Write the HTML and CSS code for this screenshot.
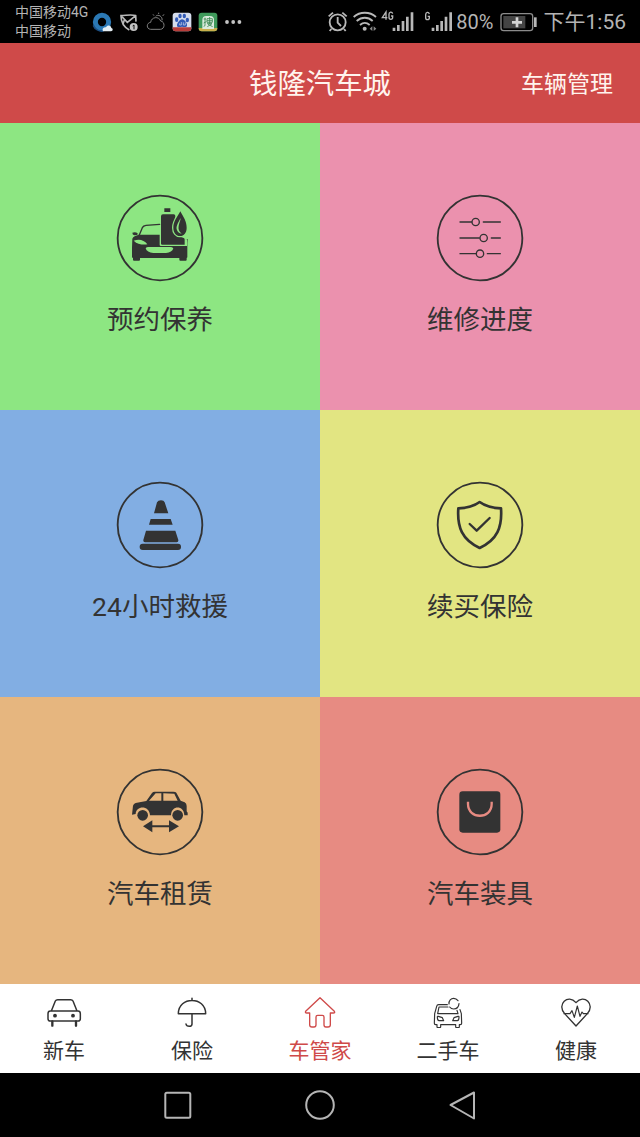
FILE: index.html
```html
<!DOCTYPE html>
<html lang="zh-CN">
<head>
    <meta charset="UTF-8">
    <meta name="viewport" content="width=device-width, initial-scale=1.0">
    <title>钱隆汽车城</title>
    <link rel="stylesheet" href="styles.css">
</head>
<body>
    <div class="status-bar">
        <div class="carriers">
            <div>中国移动4G</div>
            <div>中国移动</div>
        </div>
        <div class="notifications">
            <svg width="21" height="22" viewBox="276 33 63 66">
                <circle cx="306" cy="66" r="20" fill="none" stroke="#2b78b4" stroke-width="15"/>
                <path d="M280 76a28 28 0 0 0 30 17" fill="none" stroke="#1b4f83" stroke-width="5"/>
                <path d="M309 94c-4-9 3-14 9-12 4-9 16-6 16 2 6 1 5 10-1 10z" fill="#e4edf2"/>
            </svg>
            <svg width="20" height="22" viewBox="360 33 60 66" fill="none" stroke="#b9b9b9" stroke-width="5">
                <path d="M391 90c-16-9-25-22-25-43 15 0 28-5 44 0l1 18M367 48l18 19 25-20M376 60l-4 12"/>
                <circle cx="404" cy="81" r="12" fill="#c4c4c4" stroke="none"/>
                <path d="M401 78l4-3v13" stroke="#111" stroke-width="3"/>
            </svg>
            <svg width="20" height="22" viewBox="437 33 60 66" fill="none" stroke="#808080" stroke-width="3">
                <path d="M451 88c-14-1-13-20 0-21 2-17 25-19 30-4 14 2 13 25-1 25z"/>
                <path d="M466 49c7-8 22 1 19 12M475 38v4M458 43l3 4M491 43l-4 5"/>
            </svg>
            <svg width="20" height="20" viewBox="517 36 60 60">
                <rect x="519" y="38" width="56" height="56" rx="9" fill="#d5dcec"/>
                <path d="M519 82h56v3q0 9-9 9h-38q-9 0-9-9z" fill="#b83d3a"/>
                <g fill="#3159b5">
                    <ellipse cx="531" cy="59" rx="5" ry="7"/>
                    <ellipse cx="541" cy="48" rx="5" ry="7"/>
                    <ellipse cx="554" cy="48" rx="5" ry="7"/>
                    <ellipse cx="563" cy="60" rx="5" ry="7"/>
                    <path d="M547 58c8 0 17 13 15 19-2 7-10 3-15 3s-14 4-15-3c-1-6 8-19 15-19z"/>
                </g>
                <path d="M540 70v5h5v-9M551 67v8h6v-8" fill="none" stroke="#d5dcec" stroke-width="2"/>
            </svg>
            <svg width="20" height="20" viewBox="597 36 60 60">
                <rect x="599" y="38" width="56" height="56" rx="9" fill="#3f9a5b"/>
                <path d="M599 84h56q0 10-9 10h-38q-9 0-9-10z" fill="#c9b04c"/>
                <path d="M610 87V60q0-12 12-12h11q12 0 12 12v27z" fill="#dbeadd"/>
                <path d="M614 57h7M618 53v24l-4 2M614 69l8-4M624 56h16v11h-16zM632 51v21M624 62h16M624 71h15l-14 9M627 73l14 7" fill="none" stroke="#3a8751" stroke-width="2.5"/>
            </svg>
            <svg class="more" width="18" height="6" viewBox="0 0 18 6" fill="#c4c4c4">
                <circle cx="3" cy="3" r="1.9"/><circle cx="9.2" cy="3" r="1.9"/><circle cx="15.4" cy="3" r="1.9"/>
            </svg>
        </div>
        <div class="system">
            <svg width="88" height="24" viewBox="24 30 264 72" fill="none" stroke="#b8b8b8" stroke-width="5.5">
                <circle cx="56" cy="67" r="24"/>
                <path d="M56 51v17l10 10M29 49l13-11M70 38l13 11M37 87l-5 6M75 87l5 6"/>
                <path d="M104 51c19-17 48-17 67 0M113 63c15-13 34-13 48 0M123 75c9-8 20-8 29 0"/>
                <circle cx="137" cy="86" r="6" fill="#b8b8b8" stroke="none"/>
                <path d="M152 86l8-7v14zM172 86l-8-7v14z" fill="#8a8a8a" stroke="none"/>
                <path d="M225 83v10M238 75v18M252 63v30M265 50v43M279 37v56" stroke-width="8"/>
                <path d="M201 59V36l-11 17h15M221 41c-2-7-11-6-11 2v9c0 8 11 8 11 0v-4h-5" stroke-width="4"/>
            </svg>
            <svg class="sim2" width="29" height="24" viewBox="314 30 87 72" fill="none" stroke="#b8b8b8">
                <path d="M341 83v10M354 75v18M367 63v30M380 50v43M394 37v56" stroke-width="8"/>
                <path d="M330 42c-2-7-11-6-11 2v9c0 8 11 8 11 0v-4h-5" stroke-width="4"/>
            </svg>
            <span class="percent">80%</span>
            <svg class="battery" width="38" height="20" viewBox="540 36 114 60">
                <rect x="543" y="41" width="95" height="51" rx="8" fill="none" stroke="#8b8b8b" stroke-width="4"/>
                <rect x="550" y="48" width="66" height="37" fill="#444"/>
                <path d="M591 52v30M576 67h30" stroke="#d4d4d4" stroke-width="8"/>
                <path d="M646 52v29" stroke="#b8b8b8" stroke-width="8"/>
            </svg>
            <span class="clock">下午1:56</span>
        </div>
    </div>

    <header class="header">
        <h1>钱隆汽车城</h1>
        <a class="manage">车辆管理</a>
    </header>

    <main class="grid">
        <div class="tile green">
            <svg class="tile-icon" viewBox="17 13 264 264">
                <circle class="ring" cx="149" cy="145" r="127"/>
                <path d="M66 129q9-4 16 2l-1 5-9 1q-6-1-6-8z"/>
                <path d="M86 138l10-24q3-6 11-7l41-3" class="line" stroke-width="4"/>
                <path d="M66 147q2-5 7-7l12-5h63v31q0 3 4 3h78v-20h-6l8-1-1 12v42q0 3-3 3H69q-4 0-4-3v-27z"/>
                <path d="M70 153c16-6 31-3 41 11-14 2-32-1-41-11z" fill="#8de682"/>
                <path d="M106 176q2-4 8-4h66q6 0 9 4-4 13-22 14h-38q-19-1-23-14z" fill="#8de682"/>
                <path d="M162 56h18v11h-18zM158 74h32q5 0 5 5l2 57 23 9q3 1 3 5v15h-67q-4 0-4-3V80q0-6 6-6z"/>
                <path d="M210 65c10 18 19 30 19 49 0 15-8 25-20 25s-20-10-20-25c0-19 11-31 21-49z" stroke="#8de682" stroke-width="8" paint-order="stroke"/>
                <path d="M211 85c-7 13-14 24-12 34 3 9 8 13 15 13-8-6-11-14-9-23 1-9 5-14 6-24z" fill="#8de682"/>
                <path d="M68 205h21v5q0 3-3 3H71q-3 0-3-3zM207 205h22v5q0 3-3 3h-16q-3 0-3-3z"/>
            </svg>
            <p>预约保养</p>
        </div>
        <div class="tile pink">
            <svg class="tile-icon" viewBox="17 13 264 264">
                <circle class="ring" cx="149" cy="145" r="127"/>
                <g class="line" stroke-width="4">
                    <path d="M89 97h35M159 97h51M89 145h58M183 145h27M89 192h47M171 192h39"/>
                    <circle cx="136" cy="97" r="11"/>
                    <circle cx="160" cy="145" r="11"/>
                    <circle cx="149" cy="192" r="11"/>
                </g>
            </svg>
            <p>维修进度</p>
        </div>
        <div class="tile blue">
            <svg class="tile-icon" viewBox="17 13 264 264">
                <circle class="ring" cx="149" cy="145" r="127"/>
                <path d="M131 110l9-33q3-6 12-6t11 6l11 33zM121 127h60l6 17h-71zM107 162h88l9 28q1 7-5 7H104q-6 0-5-7z"/>
                <rect x="88" y="201" width="124" height="19" rx="9"/>
            </svg>
            <p>24小时救援</p>
        </div>
        <div class="tile yellow">
            <svg class="tile-icon" viewBox="17 13 264 264">
                <circle class="ring" cx="149" cy="145" r="127"/>
                <path d="M148 76c15 11 35 18 64 19 4 57-11 94-64 119-53-25-68-62-64-119 29-1 49-8 64-19z" class="line" stroke-width="8"/>
                <path d="M118 142l21 20 39-38" class="line" stroke-width="7"/>
            </svg>
            <p>续买保险</p>
        </div>
        <div class="tile orange">
            <svg class="tile-icon" viewBox="17 13 264 264">
                <circle class="ring" cx="149" cy="145" r="127"/>
                <path fill-rule="evenodd" d="M65 153l3-27q2-6 8-8l32-6 17-24q3-4 8-4h56q7 0 9 3l13 24 12 5q6 3 6 11v16l3 4v8h-10c-1-31-39-31-40 0h-63c-1-31-42-31-43-4zM116 111h37V89h-17zM159 89v22h43l-10-21z"/>
                <circle cx="97" cy="155" r="16"/>
                <circle cx="202" cy="155" r="16"/>
                <path d="M98 188l28-18v15h50v-15l30 18-30 18v-15h-50v15z"/>
            </svg>
            <p>汽车租赁</p>
        </div>
        <div class="tile red">
            <svg class="tile-icon" viewBox="17 13 264 264">
                <circle class="ring" cx="149" cy="145" r="127"/>
                <rect x="87" y="83" width="123" height="124" rx="10"/>
                <path d="M113 114v7c0 47 71 47 71 0v-7" fill="none" stroke="#e78b82" stroke-width="7"/>
            </svg>
            <p>汽车装具</p>
        </div>
    </main>

    <nav class="tab-bar">
        <a class="tab">
            <svg viewBox="138 48 108 96" stroke-width="4.5">
                <path d="M154 93l12-30q2-4 7-4h39q5 0 7 4l12 30M151 93h83q7 0 7 8v15q0 7-7 7h-83q-7 0-7-7v-15q0-8 7-8z"/>
                <path d="M157 124v13M228 124v13" stroke-width="7"/>
                <circle cx="165" cy="107" r="3.5" fill="currentColor"/>
                <circle cx="219" cy="107" r="3.5" fill="currentColor"/>
            </svg>
            <span>新车</span>
        </a>
        <a class="tab">
            <svg viewBox="522 48 108 96" stroke-width="4.5">
                <path d="M576 55v6M535 101c0-53 82-53 82 0zM576 101v31q0 7-8 7-9 0-10-7"/>
            </svg>
            <span>保险</span>
        </a>
        <a class="tab active">
            <svg viewBox="906 48 108 96" stroke-width="4">
                <path d="M960 53l43 41q3 5-3 5h-9v35q0 7-7 7h-6q-6 0-6-7v-23q0-5-5-5h-14q-5 0-5 5v23q0 7-6 7h-6q-7 0-7-7V99h-9q-5 0-3-5z"/>
            </svg>
            <span>车管家</span>
        </a>
        <a class="tab">
            <svg viewBox="330 48 108 96" stroke-width="3.5">
                <path d="M382 74h-26q-5 0-6 5l-6 22-1 29q0 4 4 4h4v6q0 3 3 3h5q3 0 3-3v-6h45v6q0 3 3 3h5q3 0 3-3v-6h3q4 0 4-4l-1-29-4-12M384 81h-27l-4 20h61l-3-10"/>
                <path d="M387 72c-1-11 6-17 14-17 6 0 10 3 13 7M417 71c-1 10-8 16-16 16-5 0-9-2-12-6"/>
                <path d="M352 111q0-3 3-2l12 4 4 9h-14q-5 0-5-11zM417 111q0-3-3-2l-12 4-4 9h14q5 0 5-11z"/>
            </svg>
            <span>二手车</span>
        </a>
        <a class="tab">
            <svg viewBox="714 48 108 96" stroke-width="4">
                <path d="M768 138l-34-37c-25-27 10-61 34-33 24-28 59 6 34 33z"/>
                <path d="M732 101h18l6-9 7 20 9-34 8 31 6-13 4 5h14" stroke-width="3.5"/>
            </svg>
            <span>健康</span>
        </a>
    </nav>

    <div class="system-nav">
        <svg viewBox="0 0 32 32"><rect x="3.3" y="3.8" width="25" height="25" rx="1.5"/></svg>
        <svg viewBox="0 0 32 32"><circle cx="16" cy="16" r="13.8"/></svg>
        <svg viewBox="0 0 32 32"><path d="M28 3.5v26L4.5 16z"/></svg>
    </div>
</body>
</html>
```

FILE: styles.css
```css
* {
    margin: 0;
    padding: 0;
    box-sizing: border-box;
}

body {
    width: 640px;
    height: 1137px;
    display: flex;
    flex-direction: column;
    overflow: hidden;
    background: #000;
    font-family: Roboto, "Noto Sans CJK SC", sans-serif;
    color: #333;
}

svg {
    display: block;
    flex-shrink: 0;
}

/* status bar */
.status-bar {
    height: 43px;
    display: flex;
    align-items: center;
    padding: 0 14px 0 15px;
    color: #b4b4b4;
}

.carriers {
    width: 77px;
    font-size: 14px;
    line-height: 19px;
    white-space: nowrap;
}

.notifications {
    display: flex;
    align-items: center;
    gap: 6.3px;
}

.system {
    display: flex;
    align-items: center;
    margin-left: auto;
}

.sim2 {
    margin-left: 9px;
}

.percent {
    margin-left: 3px;
    font-size: 20px;
}

.battery {
    margin-left: 6px;
}

.clock {
    margin-left: 6px;
    padding-bottom: 3px;
    font-size: 21px;
    white-space: nowrap;
}

/* header */
.header {
    height: 80px;
    display: grid;
    grid-template-columns: 1fr auto 1fr;
    align-items: center;
    padding: 0 27px 3px;
    background: #cf4a49;
    color: #fff4ee;
}

.header h1 {
    grid-column: 2;
    font-size: 28.4px;
    font-weight: 400;
}

.manage {
    justify-self: end;
    font-size: 23px;
}

/* tiles */
.grid {
    height: 861px;
    display: grid;
    grid-template-columns: 1fr 1fr;
    grid-template-rows: repeat(3, 1fr);
}

.tile {
    display: flex;
    flex-direction: column;
    align-items: center;
    padding-top: 71px;
}

.tile-icon {
    width: 88px;
    height: 88px;
    fill: #333;
}

.ring {
    fill: none;
    stroke: #333;
    stroke-width: 5.5;
}

.line {
    fill: none;
    stroke: #333;
    stroke-linecap: round;
    stroke-linejoin: round;
}

.tile p {
    margin-top: 19px;
    font-size: 26.5px;
    line-height: 38px;
}

.green { background: #8de682; }
.pink { background: #eb91ae; }
.blue { background: #82aee3; }
.yellow { background: #e2e582; }
.orange { background: #e6b67f; }
.red { background: #e78b82; }

/* bottom tabs */
.tab-bar {
    height: 89px;
    display: grid;
    grid-template-columns: repeat(5, 1fr);
    background: #fff;
}

.tab {
    display: flex;
    flex-direction: column;
    align-items: center;
    padding-top: 12px;
}

.tab svg {
    width: 36px;
    height: 32px;
    fill: none;
    stroke: currentColor;
    stroke-linecap: round;
    stroke-linejoin: round;
}

.tab span {
    margin-top: 8px;
    font-size: 21px;
    line-height: 30px;
}

.tab.active {
    color: #cf4a49;
}

.system-nav {
    height: 64px;
    display: flex;
    justify-content: center;
    align-items: center;
    gap: 110px;
}

.system-nav svg {
    width: 32px;
    height: 32px;
    fill: none;
    stroke: #b5b5b5;
    stroke-width: 2;
    stroke-linejoin: round;
}
```
